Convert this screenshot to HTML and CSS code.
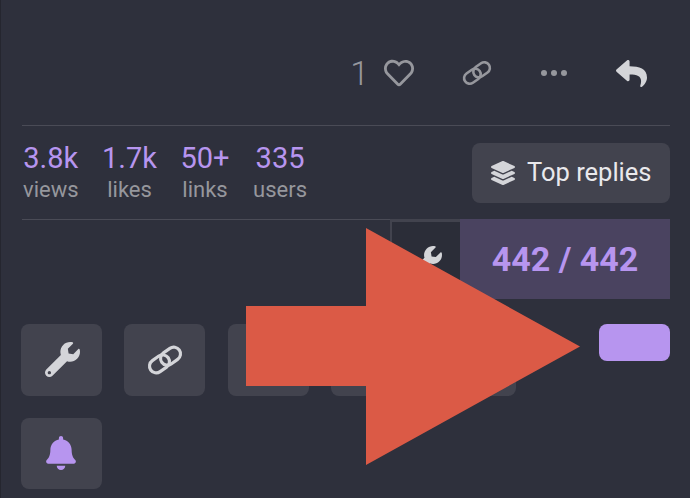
FILE: index.html
```html
<!DOCTYPE html>
<html lang="en">
<head>
  <meta charset="UTF-8">
  <title>Topic footer</title>
  <link rel="stylesheet" href="styles.css">
</head>
<body>
  <svg class="defs" width="0" height="0">
    <symbol id="i-wrench" viewBox="0 0 512 512"><path d="M507.73 109.1c-2.24-9.03-13.54-12.09-20.12-5.51l-74.36 74.36-67.88-11.31-11.31-67.88 74.36-74.36c6.62-6.62 3.43-17.9-5.66-20.16-47.38-11.74-99.55.91-136.58 37.93-39.64 39.64-50.55 97.1-34.05 147.2L18.74 402.76c-24.99 24.99-24.99 65.51 0 90.5 24.99 24.99 65.51 24.99 90.5 0l213.21-213.21c50.12 16.71 107.47 5.68 147.37-34.22 37.07-37.07 49.7-89.32 37.91-136.73zM64 472c-13.25 0-24-10.75-24-24 0-13.26 10.75-24 24-24s24 10.74 24 24c0 13.25-10.75 24-24 24z"/></symbol>
    <symbol id="i-link" viewBox="0 0 32 32"><g fill="none" stroke="currentColor" stroke-width="2.8" transform="rotate(-35 16 16)"><rect x="0.5" y="10" width="19" height="12" rx="6"/><rect x="12.5" y="10" width="19" height="12" rx="6"/></g></symbol>
  </svg>

  <div class="post-actions">
    <span class="like-count">1</span>
    <svg class="icon heart" viewBox="0 0 512 512"><path d="M458.4 64.3C400.6 15.7 311.3 23 256 79.3 200.7 23 111.4 15.6 53.6 64.3-21.6 127.6-10.6 230.8 43 285.5l175.4 178.7c10 10.2 23.4 15.9 37.6 15.9 14.3 0 27.6-5.6 37.6-15.8L469 285.6c53.5-54.7 64.7-157.9-10.6-221.3zm-23.6 187.5L259.4 430.5c-2.4 2.4-4.4 2.4-6.8 0L77.2 251.8c-36.5-37.2-43.9-107.6 7.3-150.7 38.9-32.7 98.9-27.8 136.5 10.5l35 35.7 35-35.7c37.8-38.5 97.8-43.2 136.5-10.6 51.1 43.1 43.5 113.9 7.3 150.8z"/></svg>
    <svg class="icon share"><use href="#i-link"/></svg>
    <svg class="icon dots" viewBox="0 0 26 6"><circle cx="3" cy="3" r="3"/><circle cx="13" cy="3" r="3"/><circle cx="23" cy="3" r="3"/></svg>
    <svg class="icon reply" viewBox="0 0 512 512"><path d="M8.309 189.836L184.313 37.851C199.719 24.546 224 35.347 224 56.015v80.053c160.629 1.839 288 34.032 288 186.258 0 61.441-39.581 122.309-83.333 154.132-13.653 9.931-33.111-2.533-28.077-18.631 45.344-145.012-21.507-183.51-176.59-185.742V360c0 20.7-24.3 31.453-39.687 18.164l-176.004-152c-11.071-9.562-11.086-26.753 0-36.328z"/></svg>
  </div>

  <div class="topic-map">
    <ul class="stats">
      <li><b>3.8k</b><span>views</span></li>
      <li><b>1.7k</b><span>likes</span></li>
      <li><b>50+</b><span>links</span></li>
      <li><b>335</b><span>users</span></li>
    </ul>
    <button class="btn top-replies">
      <svg class="layers" viewBox="0 0 512 512"><path d="M12.41 148.02l232.94 105.67c6.8 3.09 14.49 3.09 21.29 0l232.94-105.67c16.55-7.51 16.55-32.52 0-40.03L266.65 2.31a25.607 25.607 0 0 0-21.29 0L12.41 107.98c-16.55 7.51-16.55 32.53 0 40.04zm487.18 88.28l-58.09-26.33-161.64 73.27c-7.56 3.43-15.59 5.17-23.86 5.17s-16.29-1.74-23.86-5.17L70.51 209.97l-58.1 26.33c-16.55 7.5-16.55 32.5 0 40l232.94 105.59c6.8 3.08 14.49 3.08 21.29 0L499.59 276.3c16.55-7.5 16.55-32.5 0-40zm0 127.8l-57.87-26.23-161.86 73.37c-7.56 3.43-15.59 5.17-23.86 5.17s-16.29-1.74-23.86-5.17L70.29 337.87 12.41 364.1c-16.55 7.5-16.55 32.5 0 40l232.94 105.59c6.8 3.08 14.49 3.08 21.29 0L499.59 404.1c16.55-7.5 16.55-32.5 0-40z"/></svg>
      <span class="btn-label">Top replies</span>
    </button>
  </div>

  <div class="timeline">
    <div class="timeline-admin"><svg class="wrench-small"><use href="#i-wrench"/></svg></div>
    <div class="timeline-count">442 / 442</div>
  </div>

  <div class="footer">
    <div class="tools">
      <button class="tool"><svg class="tool-icon wrench"><use href="#i-wrench"/></svg></button>
      <button class="tool"><svg class="tool-icon link"><use href="#i-link"/></svg></button>
      <button class="tool"></button>
      <button class="tool"></button>
      <button class="tool"></button>
      <button class="tool">
        <svg class="tool-icon bell" viewBox="0 0 448 512"><path d="M224 512c35.32 0 63.97-28.65 63.97-64H160.03c0 35.35 28.65 64 63.97 64zm215.39-149.71c-19.32-20.76-55.47-51.99-55.47-154.29 0-77.7-54.48-139.9-127.94-155.16V32c0-17.67-14.32-32-31.98-32s-31.98 14.33-31.98 32v20.84C118.56 68.1 64.08 130.3 64.08 208c0 102.3-36.15 133.53-55.47 154.29-6 6.45-8.66 14.16-8.61 21.71.11 16.4 12.98 32 32.1 32h383.8c19.12 0 32-15.6 32.1-32 .05-7.55-2.61-15.27-8.61-21.71z"/></svg>
      </button>
    </div>
    <button class="primary"></button>
  </div>

  <!-- annotation drawn over the screenshot -->
  <svg class="arrow" width="690" height="498" viewBox="0 0 690 498">
    <polygon points="246,306 366,306 366,228 580,346.5 366,465 366,386 246,386"/>
  </svg>
</body>
</html>
```

FILE: styles.css
```css
html, body {
  margin: 0;
  height: 498px;
  overflow: hidden;
}

body {
  background-color: #2e303c;
  font-family: Roboto, "Liberation Sans", sans-serif;
  box-shadow: inset 1px 0 0 #25262f;
}

.defs {
  position: absolute;
}

button {
  border: 0;
  padding: 0;
  font-family: inherit;
}

.post-actions {
  display: flex;
  align-items: center;
  height: 125px;
  padding: 21px 43px 0 0;
  box-sizing: border-box;
  justify-content: flex-end;
}

.like-count {
  font-size: 34px;
  font-weight: 300;
  color: #96979d;
  margin-right: 15px;
}

.icon {
  fill: #96979d;
  color: #96979d;
}

.heart {
  width: 30px;
  height: 30px;
  margin-right: 48px;
}

.share {
  width: 30px;
  height: 30px;
  margin-right: 49px;
}

.dots {
  width: 26px;
  height: 6px;
  margin-right: 49px;
}

.reply {
  width: 31px;
  height: 31px;
  fill: #d4d5d9;
}

.topic-map {
  display: flex;
  justify-content: space-between;
  align-items: center;
  height: 93px;
  margin: 0 20px 0 22px;
  border-top: 1px solid #4a4b56;
  border-bottom: 1px solid #4a4b56;
}

.stats {
  display: flex;
  gap: 23.5px;
  list-style: none;
  margin: 0;
  padding: 0 0 0 1px;
}

.stats li {
  display: flex;
  flex-direction: column;
  align-items: center;
}

.stats b {
  font-weight: 400;
  font-size: 29px;
  line-height: 34px;
  color: #b795ef;
}

.stats span {
  margin-top: 1px;
  font-size: 22px;
  line-height: 28px;
  color: #96979d;
}

.btn {
  display: flex;
  align-items: center;
  gap: 12px;
  width: 198px;
  height: 60px;
  padding-left: 19px;
  border-radius: 8px;
  background-color: #42434e;
  color: #e9e9ec;
  font-size: 25.5px;
}

.btn-label {
  margin-top: -2px;
}

.layers {
  width: 24px;
  height: 24px;
  fill: #d4d5d9;
}

.timeline {
  display: flex;
  justify-content: flex-end;
  margin: -1px 20px 0 0;
  height: 80px;
}

.timeline-admin {
  display: flex;
  align-items: center;
  justify-content: flex-end;
  box-sizing: border-box;
  width: 70px;
  padding: 3px 18px 0 0;
  border-left: 2px solid #42434e;
  border-top: 3px solid #42434e;
  background-color: #2b2d38;
}

.wrench-small {
  width: 32px;
  height: 32px;
  fill: #d4d5d9;
}

.timeline-count {
  width: 210px;
  line-height: 80px;
  text-align: center;
  background-color: #4a4360;
  color: #b795ef;
  font-size: 34px;
  font-weight: 700;
}

.footer {
  display: flex;
  justify-content: space-between;
  align-items: flex-start;
  margin: 25px 20px 0 20.6px;
}

.tools {
  display: flex;
  flex-wrap: wrap;
  gap: 22px 22.5px;
  width: 500px;
}

.tool {
  display: flex;
  align-items: center;
  justify-content: center;
  width: 81px;
  height: 71.5px;
  border-radius: 8px;
  background-color: #42434e;
}

.tool-icon {
  width: 36px;
  height: 36px;
  fill: #d4d5d9;
  color: #d4d5d9;
}

.tool-icon.wrench {
  width: 35px;
  height: 35px;
  margin-left: 2px;
}

.tool-icon.bell {
  width: 30px;
  height: 34px;
  fill: #b795ef;
}

.primary {
  width: 71px;
  height: 37px;
  border-radius: 8px;
  background-color: #b795ef;
}

.arrow {
  position: absolute;
  left: 0;
  top: 0;
  fill: #db5a46;
}
```
